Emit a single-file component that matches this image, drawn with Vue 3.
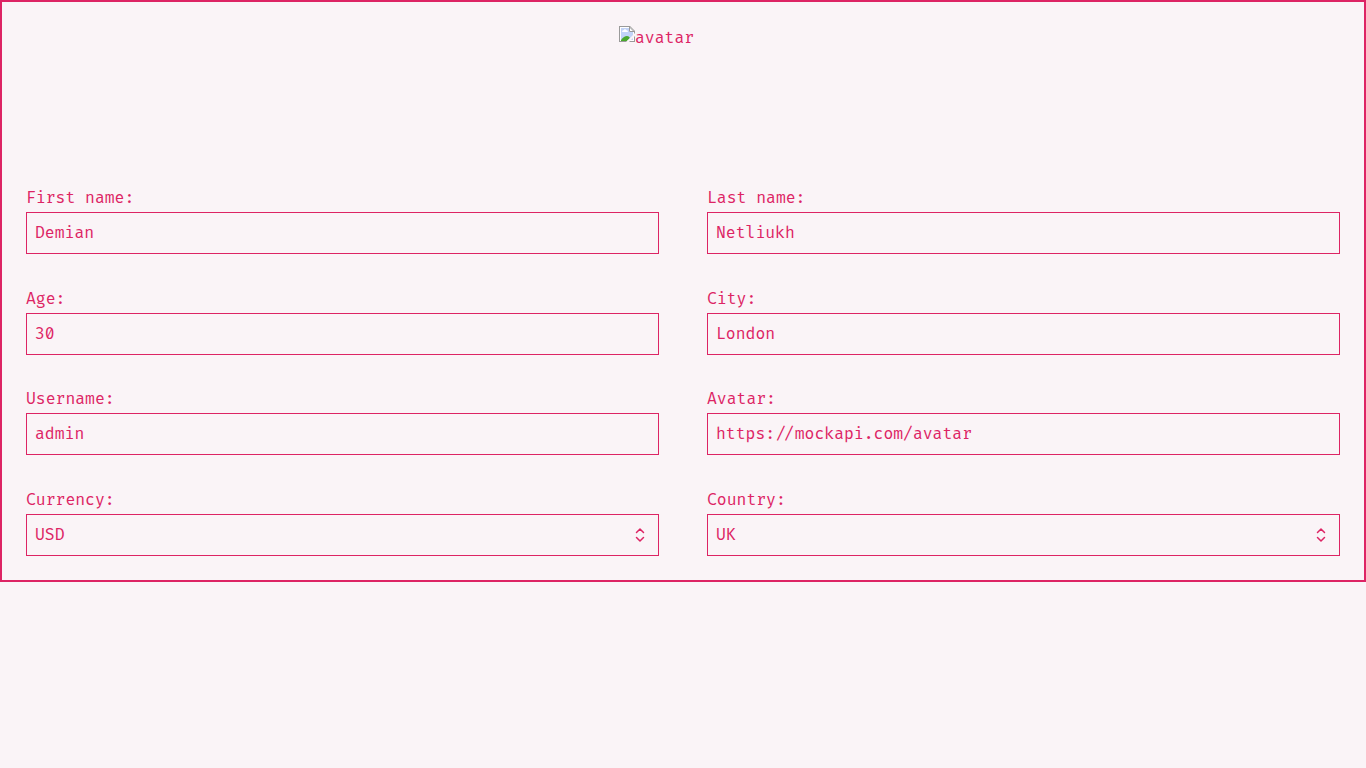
<script setup>
import { reactive } from 'vue'

const profile = reactive({
  firstName: 'Demian',
  lastName: 'Netliukh',
  age: '30',
  city: 'London',
  username: 'admin',
  avatar: 'https://mockapi.com/avatar',
  currency: 'USD',
  country: 'UK',
})

const fields = [
  { key: 'firstName', label: 'First name:' },
  { key: 'lastName', label: 'Last name:' },
  { key: 'age', label: 'Age:' },
  { key: 'city', label: 'City:' },
  { key: 'username', label: 'Username:' },
  { key: 'avatar', label: 'Avatar:' },
  { key: 'currency', label: 'Currency:', options: ['USD', 'EUR', 'RUB'] },
  { key: 'country', label: 'Country:', options: ['UK', 'USA', 'Armenia'] },
]
</script>

<template>
  <main class="card">
    <div class="avatar">
      <svg class="missing" width="16" height="16" viewBox="0 0 16 16" aria-hidden="true">
        <path d="M0 0h11l5 5v11H0z" fill="#9a9a9a" />
        <path d="M1 1h10l4 4v10H1z" fill="#fff" />
        <path d="M2 2h8v4h4v8H2z" fill="#c2d3f7" />
        <path d="M3 6q0-2 2-2 1-2 2 0 2 0 2 2z" fill="#fff" />
        <path d="M2 15v-1q3-4 6-4 2 0 3 2l-3 3z" fill="#4aa82e" />
        <path d="M10.500 1v4.500H15z" fill="#fff" stroke="#9a9a9a" />
        <path d="M16 7v3l-6 6H7z" fill="#faf4f7" />
      </svg>
      <span>avatar</span>
    </div>
    <form class="form" @submit.prevent>
      <div v-for="field in fields" :key="field.key" class="field">
        <label :for="field.key">{{ field.label }}</label>
        <div v-if="field.options" class="select">
          <select :id="field.key" v-model="profile[field.key]" class="control">
            <option v-for="option in field.options" :key="option">{{ option }}</option>
          </select>
          <svg class="arrows" width="10" height="16" viewBox="0 0 10 16" aria-hidden="true">
            <path d="M1.500 5.500 5 2 8.500 5.500M1.500 10.500 5 14 8.500 10.500" />
          </svg>
        </div>
        <input v-else :id="field.key" v-model="profile[field.key]" class="control" type="text" />
      </div>
    </form>
  </main>
</template>

<style>
body {
  background: #faf4f7;
}
</style>

<style scoped>
.card {
  box-sizing: border-box;
  display: flex;
  flex-direction: column;
  gap: 32px;
  padding: 24px;
  border: 2px solid #dd2464;
  color: #dd2464;
  font-family: "Fira Code", "Liberation Mono", monospace;
  font-size: 16px;
  line-height: 24px;
}
.avatar {
  display: flex;
  align-items: flex-start;
  align-self: center;
  width: 128px;
  height: 128px;
}
.missing {
  flex: none;
}
.form {
  display: grid;
  grid-template-columns: 1fr 1fr;
  align-content: space-between;
  gap: 32px 48px;
  min-height: 370px;
}
.field {
  display: flex;
  flex-direction: column;
  gap: 2px;
}
.control {
  box-sizing: border-box;
  display: block;
  width: 100%;
  height: 42px;
  margin: 0;
  padding: 0 8px;
  border: 1px solid #dd2464;
  border-radius: 0;
  outline: none;
  background: transparent;
  color: inherit;
  font: inherit;
  appearance: none;
}
.select {
  position: relative;
}
.arrows {
  position: absolute;
  top: 13px;
  right: 14px;
  fill: none;
  stroke: currentColor;
  stroke-width: 1.500;
  stroke-linecap: round;
  stroke-linejoin: round;
  pointer-events: none;
}
</style>
